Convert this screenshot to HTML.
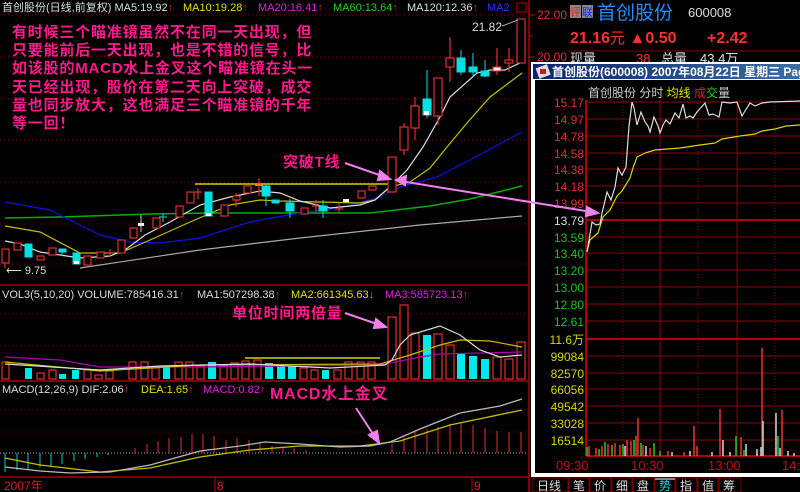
<!DOCTYPE html>
<html><head><meta charset="utf-8"><style>
html,body{margin:0;padding:0;background:#000;width:800px;height:492px;overflow:hidden}
svg{display:block;font-family:"Liberation Sans","Noto Sans CJK SC",sans-serif}
</style></head><body>
<svg width="800" height="492" viewBox="0 0 800 492" xmlns="http://www.w3.org/2000/svg">
<rect width="800" height="492" fill="#000"/>
<g stroke="#800000" stroke-dasharray="1,3">
<line x1="0" y1="15" x2="528" y2="15"/><line x1="0" y1="57" x2="528" y2="57"/><line x1="0" y1="99" x2="528" y2="99"/>
<line x1="0" y1="140" x2="528" y2="140"/><line x1="0" y1="182" x2="528" y2="182"/><line x1="0" y1="224" x2="528" y2="224"/><line x1="0" y1="264" x2="528" y2="264"/>
<line x1="0" y1="314" x2="528" y2="314"/><line x1="0" y1="346" x2="528" y2="346"/>
<line x1="0" y1="410" x2="528" y2="410"/><line x1="0" y1="432" x2="528" y2="432"/>
</g>
<g stroke="#b00000" stroke-width="1.5">
<line x1="0" y1="285" x2="529" y2="285"/><line x1="0" y1="381" x2="529" y2="381"/><line x1="0" y1="477" x2="529" y2="477"/>
<line x1="529" y1="0" x2="529" y2="492"/>
</g>
<g stroke="#c00000"><line x1="529" y1="15" x2="535" y2="15"/><line x1="529" y1="36" x2="533" y2="36"/><line x1="529" y1="57" x2="535" y2="57"/></g>
<text x="537" y="19" fill="#e03030" font-size="12">22.00</text>
<text x="537" y="61" fill="#e03030" font-size="12">20.00</text>

<g font-size="11">
<text x="2" y="11" fill="#ddd">首创股份(日线,前复权) MA5:19.92<tspan fill="#e02020">↑</tspan></text>
<text x="183" y="11" fill="#e0e000">MA10:19.28<tspan fill="#e02020">↑</tspan></text>
<text x="258" y="11" fill="#e020e0">MA20:16.41<tspan fill="#e02020">↑</tspan></text>
<text x="333" y="11" fill="#20d020">MA60:13.64<tspan fill="#e02020">↑</tspan></text>
<text x="407" y="11" fill="#ddd">MA120:12.36<tspan fill="#e02020">↑</tspan></text>
<text x="487" y="11" fill="#3030ff">MA2</text>
</g>
<rect x="517" y="3" width="9" height="9" fill="none" stroke="#c00000"/>

<g fill="none" stroke-width="1.2">
<polyline stroke="#aaa" points="80,268 200,250 300,238 420,225 522,216"/>
<polyline stroke="#00b000" stroke-width="1.5" points="5,218 60,217 150,214 210,213 370,213 430,206 470,199 522,186"/>
<polyline stroke="#1010e0" points="5,202 50,210 100,235 130,242 160,243 200,238 250,222 300,213 340,208 380,197 400,187 437,177 470,160 522,132"/>
<polyline stroke="#c0c000" points="5,226 40,232 80,253 120,253 150,240 190,222 230,205 260,200 280,201 320,202 360,203 375,200 390,187 410,182 430,168 447,147 467,123 490,97 522,73"/>
<polyline stroke="#ddd" points="5,241 20,244 40,252 80,258 110,256 125,250 145,235 170,222 200,205 230,197 260,191 280,193 300,201 330,208 360,205 375,200 392,185 407,170 423,147 440,117 450,97 477,73 490,70 505,70 522,62"/>
</g>
<line x1="195" y1="184" x2="395" y2="184" stroke="#a0a000" stroke-width="2"/>

<g stroke="#e03030" fill="#000" stroke-width="1.2">
<line x1="5" y1="249" x2="5" y2="268"/><rect x="2" y="249" width="7" height="14"/>
<rect x="14" y="243" width="7" height="7"/><rect x="37" y="256" width="7" height="4"/><rect x="49" y="248" width="7" height="7"/>
<rect x="84" y="256" width="7" height="9"/><rect x="97" y="252" width="7" height="6"/><line x1="106" y1="253" x2="114" y2="253"/><line x1="110" y1="249" x2="110" y2="257"/>
<rect x="118" y="240" width="7" height="13"/><rect x="130" y="228" width="7" height="10"/><rect x="153" y="218" width="7" height="10"/>
<rect x="176" y="206" width="7" height="11"/><rect x="187" y="192" width="7" height="11"/>
<line x1="198" y1="188" x2="198" y2="199"/><line x1="194" y1="192" x2="202" y2="192"/>
<rect x="221" y="205" width="7" height="11"/><line x1="236" y1="193" x2="236" y2="207"/><rect x="233" y="196" width="7" height="4"/>
<rect x="244" y="186" width="7" height="7"/><line x1="259" y1="178" x2="259" y2="196"/><line x1="255" y1="185" x2="263" y2="185" stroke="#ff8000" stroke-width="2"/>
<rect x="301" y="208" width="7" height="6"/><line x1="316" y1="200" x2="316" y2="212"/><line x1="312" y1="206" x2="320" y2="206"/>
<line x1="339" y1="203" x2="339" y2="213"/><line x1="335" y1="209" x2="343" y2="209"/>
<rect x="358" y="191" width="7" height="7"/><rect x="369" y="186" width="7" height="4"/>
<rect x="388" y="157" width="8" height="35"/>
<line x1="404" y1="123" x2="404" y2="155"/><rect x="400" y="127" width="8" height="23"/>
<line x1="415" y1="97" x2="415" y2="140"/><rect x="411" y="106" width="8" height="22"/>
<line x1="438" y1="78" x2="438" y2="125"/><rect x="434" y="78" width="8" height="38"/>
<line x1="450" y1="37" x2="450" y2="82"/><rect x="446" y="58" width="8" height="9"/>
<line x1="497" y1="48" x2="497" y2="75"/><rect x="493" y="67" width="8" height="4" fill="#fff"/>
<line x1="509" y1="48" x2="509" y2="72"/><rect x="505" y="60" width="8" height="3"/>
<rect x="517" y="19" width="8" height="44"/>
</g>
<g fill="#00e0e0" stroke="#00e0e0">
<rect x="25" y="244" width="7" height="13"/><rect x="59" y="249" width="7" height="3"/><line x1="62" y1="249" x2="62" y2="256"/>
<rect x="73" y="253" width="7" height="11"/><line x1="163" y1="213" x2="163" y2="222"/><line x1="159" y1="217" x2="167" y2="217"/>
<rect x="205" y="192" width="7" height="24"/><line x1="266" y1="184" x2="266" y2="206"/><rect x="262" y="186" width="8" height="10"/>
<rect x="272" y="200" width="7" height="3"/><line x1="290" y1="199" x2="290" y2="218"/><rect x="286" y="203" width="8" height="8"/>
<line x1="323" y1="200" x2="323" y2="218"/><rect x="319" y="206" width="8" height="5"/>
<line x1="427" y1="70" x2="427" y2="118"/><rect x="423" y="99" width="8" height="16"/>
<line x1="461" y1="50" x2="461" y2="75"/><rect x="457" y="58" width="8" height="14"/>
<line x1="473" y1="53" x2="473" y2="77"/><rect x="469" y="67" width="8" height="5"/>
<line x1="485" y1="60" x2="485" y2="77"/><rect x="481" y="71" width="8" height="5"/>
</g>
<g fill="#fff"><rect x="74" y="261" width="5" height="3"/><rect x="206" y="213" width="5" height="3"/><rect x="424" y="111" width="5" height="4"/>
<rect x="138" y="223" width="6" height="3"/><line x1="141" y1="215" x2="141" y2="232" stroke="#ccc"/><rect x="343" y="199" width="6" height="3"/></g>
<text x="472" y="31" fill="#ddd" font-size="12">21.82</text>
<line x1="502" y1="26" x2="518" y2="20" stroke="#aaa"/>
<text x="6" y="274" fill="#ddd" font-size="11">⟵ 9.75</text>

<g fill="#ff1a8c" font-size="15" font-weight="bold" letter-spacing="0.8" font-family="'Liberation Sans','WenQuanYi Zen Hei','Noto Sans CJK SC',sans-serif">
<text x="12" y="37">有时候三个瞄准镜虽然不在同一天出现，但</text>
<text x="12" y="55">只要能前后一天出现，也是不错的信号，比</text>
<text x="12" y="73">如该股的MACD水上金叉这个瞄准镜在头一</text>
<text x="12" y="92">天已经出现，股价在第二天向上突破，成交</text>
<text x="12" y="110">量也同步放大，这也满足三个瞄准镜的千年</text>
<text x="12" y="128">等一回！</text>
<text x="283" y="167">突破T线</text>
<text x="232" y="318">单位时间两倍量</text>
<text x="270" y="399" font-size="16">MACD水上金叉</text>
</g>
<g stroke="#f080f0" stroke-width="2" fill="#f080f0">
<line x1="345" y1="163" x2="385" y2="177"/><polygon points="390,179 380,171 378,180"/>
<line x1="345" y1="313" x2="380" y2="325"/><polygon points="386,327 376,319 374,328"/>
<line x1="356" y1="408" x2="375" y2="437"/><polygon points="379,443 369,435 377,431"/>
</g>

<g font-size="11">
<text x="2" y="298" fill="#ddd">VOL3(5,10,20) VOLUME:785416.31<tspan fill="#e02020">↑</tspan></text>
<text x="197" y="298" fill="#ddd">MA1:507298.38<tspan fill="#e02020">↑</tspan></text>
<text x="291" y="298" fill="#e0e000">MA2:661345.63<tspan fill="#00e0e0">↓</tspan></text>
<text x="385" y="298" fill="#e020e0">MA3:585723.13<tspan fill="#e02020">↑</tspan></text>
</g>
<g stroke="#e03030" fill="none" stroke-width="1.2">
<rect x="2" y="362" width="7" height="17"/><rect x="37" y="373" width="7" height="6"/><rect x="49" y="370" width="7" height="9"/>
<rect x="84" y="370" width="7" height="9"/><rect x="95" y="375" width="7" height="4"/><rect x="106" y="371" width="7" height="8"/>
<rect x="129" y="362" width="7" height="17"/><rect x="141" y="362" width="7" height="17"/><rect x="152" y="368" width="7" height="11"/>
<rect x="175" y="362" width="7" height="17"/><rect x="186" y="362" width="7" height="17"/><rect x="197" y="366" width="7" height="13"/>
<rect x="220" y="366" width="7" height="13"/><rect x="231" y="363" width="7" height="16"/><rect x="242" y="361" width="7" height="18"/><rect x="254" y="360" width="7" height="19"/>
<rect x="300" y="368" width="7" height="11"/><rect x="311" y="370" width="7" height="9"/><rect x="334" y="370" width="7" height="9"/><rect x="345" y="362" width="7" height="17"/>
<rect x="357" y="362" width="7" height="17"/><rect x="368" y="362" width="7" height="17"/>
<rect x="388" y="317" width="8" height="62"/><rect x="400" y="305" width="8" height="74"/><rect x="411" y="333" width="8" height="46"/>
<rect x="434" y="334" width="8" height="45"/><rect x="446" y="345" width="8" height="34"/><rect x="493" y="357" width="8" height="22"/><rect x="505" y="359" width="8" height="20"/><rect x="517" y="342" width="8" height="37"/>
</g>
<g fill="#00e8e8">
<rect x="25" y="368" width="7" height="11"/><rect x="59" y="374" width="7" height="5"/><rect x="72" y="370" width="7" height="9"/>
<rect x="163" y="366" width="7" height="13"/><rect x="208" y="362" width="8" height="17"/><rect x="265" y="363" width="8" height="16"/><rect x="277" y="366" width="8" height="13"/><rect x="288" y="366" width="8" height="13"/>
<rect x="322" y="370" width="7" height="9"/><rect x="423" y="335" width="8" height="44"/><rect x="457" y="353" width="8" height="26"/><rect x="469" y="356" width="8" height="23"/><rect x="481" y="359" width="8" height="20"/>
</g>
<g fill="none" stroke-width="1.2">
<polyline stroke="#b000b0" points="5,357 60,360 100,367 200,367 380,365 420,357 440,354 522,352"/>
<polyline stroke="#c0c000" points="5,362 100,371 200,365 380,364 410,355 440,345 460,340 490,341 522,347"/>
<polyline stroke="#ddd" points="5,364 100,370 160,366 250,364 330,368 385,365 392,360 400,345 410,335 440,326 460,335 480,350 500,357 522,355"/>
</g>
<line x1="245" y1="358" x2="380" y2="358" stroke="#a0a000" stroke-width="2"/>

<g font-size="11">
<text x="2" y="393" fill="#ddd">MACD(12,26,9) DIF:2.06<tspan fill="#e02020">↑</tspan></text>
<text x="141" y="393" fill="#e0e000">DEA:1.65<tspan fill="#e02020">↑</tspan></text>
<text x="203" y="393" fill="#e020e0">MACD:0.82<tspan fill="#e02020">↑</tspan></text>
</g>
<line x1="0" y1="453" x2="528" y2="453" stroke="#aaa" stroke-dasharray="1,2"/>
<g stroke="#00d0d0">
<line x1="5" y1="453" x2="5" y2="472"/><line x1="17" y1="453" x2="17" y2="470"/><line x1="28" y1="453" x2="28" y2="469"/><line x1="40" y1="453" x2="40" y2="467"/>
<line x1="51" y1="453" x2="51" y2="466"/><line x1="62" y1="453" x2="62" y2="464"/><line x1="74" y1="453" x2="74" y2="461"/><line x1="85" y1="453" x2="85" y2="459"/><line x1="97" y1="453" x2="97" y2="457"/><line x1="108" y1="453" x2="108" y2="455"/>
</g>
<g stroke="#e03030">
<line x1="135" y1="453" x2="135" y2="448"/><line x1="147" y1="453" x2="147" y2="444"/><line x1="158" y1="453" x2="158" y2="441"/><line x1="169" y1="453" x2="169" y2="438"/>
<line x1="181" y1="453" x2="181" y2="437"/><line x1="192" y1="453" x2="192" y2="434"/><line x1="203" y1="453" x2="203" y2="434"/><line x1="214" y1="453" x2="214" y2="436"/>
<line x1="226" y1="453" x2="226" y2="440"/><line x1="237" y1="453" x2="237" y2="438"/><line x1="249" y1="453" x2="249" y2="440"/><line x1="260" y1="453" x2="260" y2="443"/>
<line x1="272" y1="453" x2="272" y2="446"/><line x1="283" y1="453" x2="283" y2="448"/><line x1="294" y1="453" x2="294" y2="448"/><line x1="306" y1="453" x2="306" y2="450"/>
<line x1="392" y1="453" x2="392" y2="444"/><line x1="404" y1="453" x2="404" y2="438"/><line x1="415" y1="453" x2="415" y2="432"/><line x1="427" y1="453" x2="427" y2="429"/>
<line x1="438" y1="453" x2="438" y2="427"/><line x1="450" y1="453" x2="450" y2="424"/><line x1="461" y1="453" x2="461" y2="423"/><line x1="473" y1="453" x2="473" y2="425"/>
<line x1="485" y1="453" x2="485" y2="428"/><line x1="497" y1="453" x2="497" y2="431"/><line x1="509" y1="453" x2="509" y2="432"/><line x1="521" y1="453" x2="521" y2="432"/>
</g>
<g fill="none" stroke-width="1.3">
<polyline stroke="#c0c000" points="5,458 40,465 100,472 150,468 200,457 250,450 300,446 360,446 400,441 450,425 522,410"/>
<polyline stroke="#bbb" points="5,467 40,471 70,473 110,472 150,465 200,451 240,446 265,442 300,444 340,447 370,446 390,442 420,429 460,413 500,406 522,399"/>
</g>
<g stroke="#c00000"><line x1="215" y1="477" x2="215" y2="492"/><line x1="472" y1="477" x2="472" y2="492"/></g>
<g fill="#d02020" font-size="12"><text x="4" y="490">2007年</text><text x="217" y="490">8</text><text x="474" y="490">9</text></g>

<rect x="570" y="5" width="11" height="13" fill="#888"/><text x="570" y="16" fill="#e02020" font-size="11">评</text>
<rect x="582" y="5" width="11" height="13" fill="#888"/><text x="582" y="16" fill="#1030e0" font-size="11">联</text>
<text x="597" y="19" fill="#1e8fff" font-size="19">首创股份</text>
<text x="688" y="17" fill="#ddd" font-size="13">600008</text>
<text x="570" y="43" fill="#ff3030" font-size="16" font-weight="bold">21.16<tspan font-weight="normal" font-size="15">元</tspan> ▲0.50</text>
<text x="707" y="43" fill="#ff3030" font-size="16" font-weight="bold">+2.42</text>
<line x1="568" y1="51" x2="800" y2="51" stroke="#800000"/>
<text x="570" y="63" fill="#ddd" font-size="13">现量</text><text x="636" y="63" fill="#ff3030" font-size="13">38</text>
<text x="661" y="63" fill="#ddd" font-size="13">总量</text><text x="700" y="63" fill="#ddd" font-size="13">43.4万</text>

<rect x="531" y="62" width="269" height="415" fill="#fff"/>
<rect x="535" y="80" width="265" height="393" fill="#000"/>
<defs><linearGradient id="tb" x1="0" x2="1"><stop offset="0" stop-color="#0a246a"/><stop offset="1" stop-color="#3a6ea5"/></linearGradient></defs>
<rect x="533" y="64" width="267" height="15" fill="url(#tb)"/>
<rect x="537" y="66" width="12" height="11" fill="#ddd" transform="rotate(-20 543 71)"/><rect x="540" y="69" width="6" height="5" fill="#c02020"/>
<text x="552" y="76" fill="#fff" font-size="12" font-weight="bold">首创股份(600008) 2007年08月22日 星期三 Pag</text>
<text x="588" y="97" fill="#ccc" font-size="12">首创股份  分时 <tspan fill="#e0e000">均线</tspan> <tspan fill="#e02020">成</tspan><tspan fill="#20d020">交</tspan>量</text>
<g stroke="#900000">
<line x1="586" y1="102" x2="800" y2="102"/><line x1="586" y1="119" x2="800" y2="119"/><line x1="586" y1="136" x2="800" y2="136"/><line x1="586" y1="153" x2="800" y2="153"/>
<line x1="586" y1="169" x2="800" y2="169"/><line x1="586" y1="186" x2="800" y2="186"/><line x1="586" y1="203" x2="800" y2="203"/><line x1="586" y1="220" x2="800" y2="220" stroke-width="2" stroke="#b00000"/>
<line x1="586" y1="237" x2="800" y2="237"/><line x1="586" y1="253" x2="800" y2="253"/><line x1="586" y1="270" x2="800" y2="270"/><line x1="586" y1="287" x2="800" y2="287"/>
<line x1="586" y1="304" x2="800" y2="304"/><line x1="586" y1="321" x2="800" y2="321"/><line x1="586" y1="339" x2="800" y2="339" stroke-width="2" stroke="#b00000"/>
<line x1="586" y1="356" x2="800" y2="356"/><line x1="586" y1="373" x2="800" y2="373"/><line x1="586" y1="389" x2="800" y2="389"/><line x1="586" y1="406" x2="800" y2="406"/>
<line x1="586" y1="423" x2="800" y2="423"/><line x1="586" y1="440" x2="800" y2="440"/><line x1="586" y1="456" x2="800" y2="456" stroke-width="2" stroke="#b00000"/>
<line x1="586" y1="100" x2="586" y2="456" stroke-width="2" stroke="#b00000"/><line x1="660" y1="100" x2="660" y2="456"/><line x1="737" y1="100" x2="737" y2="456"/>
</g>
<g stroke="#900000" stroke-dasharray="1,2"><line x1="623" y1="100" x2="623" y2="456"/><line x1="698" y1="100" x2="698" y2="456"/><line x1="775" y1="100" x2="775" y2="456"/></g>
<g font-size="12" text-anchor="end">
<g fill="#e03030"><text x="584" y="107">15.17</text><text x="584" y="124">14.97</text><text x="584" y="141">14.78</text><text x="584" y="158">14.58</text><text x="584" y="174">14.38</text><text x="584" y="191">14.18</text><text x="584" y="208">13.99</text></g>
<text x="584" y="225" fill="#ddd">13.79</text>
<g fill="#20c020"><text x="584" y="242">13.59</text><text x="584" y="258">13.40</text><text x="584" y="275">13.20</text><text x="584" y="292">13.00</text><text x="584" y="309">12.80</text><text x="584" y="326">12.61</text></g>
<g fill="#d8d800"><text x="584" y="344">11.6万</text><text x="584" y="361">99084</text><text x="584" y="378">82570</text><text x="584" y="394">66056</text><text x="584" y="411">49542</text><text x="584" y="428">33028</text><text x="584" y="445">16514</text></g>
</g>
<g fill="none" stroke-width="1.2">
<polyline stroke="#d8d800" points="587,252 590,240 598,233 603,217 610,210 617,196 622,191 630,178 633,168 637,157 645,153 655,150 680,148 700,145 715,143 722,139 740,136 755,134 762,131 775,129 786,126 800,125"/>
<polyline stroke="#ddd" points="587,252 592,222 596,225 600,224 602,213 604,205 607,192 611,200 615,187 618,168 620,172 622,175 626,167 629,126 632,102 634,108 637,125 641,112 645,122 648,126 650,132 654,117 658,126 660,133 663,125 666,120 670,124 675,113 679,118 683,104 686,118 690,116 693,118 697,112 705,103 709,115 713,114 719,117 722,102 730,103 737,102 742,116 745,111 750,103 755,106 762,103 770,102 800,101"/>
</g>
<g stroke-width="1.6">
<g stroke="#e03030"><line x1="589" y1="456" x2="589" y2="446"/><line x1="596" y1="456" x2="596" y2="448"/><line x1="602" y1="456" x2="602" y2="446"/><line x1="608" y1="456" x2="608" y2="444"/><line x1="615" y1="456" x2="615" y2="443"/><line x1="620" y1="456" x2="620" y2="445"/><line x1="627" y1="456" x2="627" y2="440"/><line x1="631" y1="456" x2="631" y2="441"/><line x1="636" y1="456" x2="636" y2="436"/><line x1="638" y1="456" x2="638" y2="418"/><line x1="643" y1="456" x2="643" y2="445"/><line x1="650" y1="456" x2="650" y2="448"/><line x1="694" y1="456" x2="694" y2="426"/><line x1="697" y1="456" x2="697" y2="446"/><line x1="720" y1="456" x2="720" y2="409"/><line x1="741" y1="456" x2="741" y2="437"/><line x1="762" y1="456" x2="762" y2="348"/><line x1="782" y1="456" x2="782" y2="410"/><line x1="668" y1="456" x2="668" y2="451"/><line x1="684" y1="456" x2="684" y2="452"/></g>
<g stroke="#20c020"><line x1="587" y1="456" x2="587" y2="447"/><line x1="599" y1="456" x2="599" y2="449"/><line x1="605" y1="456" x2="605" y2="442"/><line x1="612" y1="456" x2="612" y2="445"/><line x1="623" y1="456" x2="623" y2="444"/><line x1="634" y1="456" x2="634" y2="440"/><line x1="641" y1="456" x2="641" y2="443"/><line x1="654" y1="456" x2="654" y2="443"/><line x1="660" y1="456" x2="660" y2="451"/><line x1="736" y1="456" x2="736" y2="436"/><line x1="778" y1="456" x2="778" y2="436"/><line x1="744" y1="456" x2="744" y2="450"/></g>
<g stroke="#ccc"><line x1="625" y1="456" x2="625" y2="446"/><line x1="646" y1="456" x2="646" y2="446"/><line x1="672" y1="456" x2="672" y2="452"/><line x1="690" y1="456" x2="690" y2="451"/><line x1="723" y1="456" x2="723" y2="440"/><line x1="746" y1="456" x2="746" y2="444"/><line x1="757" y1="456" x2="757" y2="449"/><line x1="761" y1="456" x2="761" y2="447"/><line x1="763" y1="456" x2="763" y2="421"/><line x1="776" y1="456" x2="776" y2="413"/><line x1="780" y1="456" x2="780" y2="448"/><line x1="788" y1="456" x2="788" y2="451"/><line x1="794" y1="456" x2="794" y2="453"/><line x1="712" y1="456" x2="712" y2="452"/><line x1="730" y1="456" x2="730" y2="452"/></g>
</g>
<g fill="#c01010" font-size="13"><text x="556" y="470">09:30</text><text x="631" y="470">10:30</text><text x="708" y="470">13:00</text><text x="782" y="470">14:0</text></g>
<rect x="531" y="477" width="269" height="15" fill="#000"/>
<g stroke="#800000" fill="none"><rect x="533" y="478" width="35" height="14"/><rect x="569" y="478" width="20" height="14"/><rect x="590" y="478" width="21" height="14"/><rect x="612" y="478" width="20" height="14"/><rect x="633" y="478" width="21" height="14"/><rect x="655" y="478" width="20" height="14"/><rect x="676" y="478" width="21" height="14"/><rect x="698" y="478" width="20" height="14"/><rect x="719" y="478" width="22" height="14"/></g>
<rect x="655" y="478" width="20" height="2" fill="#888"/>
<g fill="#ddd" font-size="12"><text x="537" y="490">日线</text><text x="573" y="490">笔</text><text x="594" y="490">价</text><text x="616" y="490">细</text><text x="637" y="490">盘</text><text x="659" y="490" fill="#00e0e0">势</text><text x="680" y="490">指</text><text x="702" y="490">值</text><text x="723" y="490">筹</text></g>

<!-- long arrow drawn over popup -->
<g stroke="#f080f0" stroke-width="2" fill="#f080f0">
<line x1="400" y1="181" x2="592" y2="212"/><polygon points="396,180 406,176 405,185"/><polygon points="598,213 587,207 586,216"/>
</g>
</svg>
</body></html>
